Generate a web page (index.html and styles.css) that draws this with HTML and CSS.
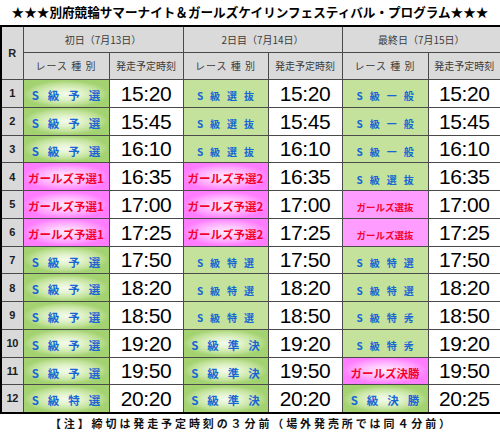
FILE: index.html
```html
<!DOCTYPE html>
<html lang="ja">
<head>
<meta charset="utf-8">
<title>別府競輪サマーナイト プログラム</title>
<link rel="stylesheet" href="styles.css">
</head>
<body>
<h1 class="title">★★★別府競輪サマーナイト＆ガールズケイリンフェスティバル・プログラム★★★</h1>
<table class="program">
  <colgroup>
    <col class="c-r">
    <col class="c-race1"><col class="c-time1">
    <col class="c-race2"><col class="c-time2">
    <col class="c-race3"><col class="c-time3">
  </colgroup>
  <thead>
    <tr class="hd1">
      <th rowspan="2" class="rh">R</th>
      <th colspan="2">初日（7月13日）</th>
      <th colspan="2">2日目（7月14日）</th>
      <th colspan="2">最終日（7月15日）</th>
    </tr>
    <tr class="hd2">
      <th class="kind">レース 種 別</th><th>発走予定時刻</th>
      <th class="kind">レース 種 別</th><th>発走予定時刻</th>
      <th class="kind">レース 種 別</th><th>発走予定時刻</th>
    </tr>
  </thead>
  <tbody>
    <tr><td class="r">1</td><td class="race g glow"><span class="s">S級予選</span></td><td class="time">15:20</td><td class="race g"><span class="s">S級選抜</span></td><td class="time">15:20</td><td class="race g"><span class="s">S級一般</span></td><td class="time">15:20</td></tr>
    <tr><td class="r">2</td><td class="race g glow"><span class="s">S級予選</span></td><td class="time">15:45</td><td class="race g"><span class="s">S級選抜</span></td><td class="time">15:45</td><td class="race g"><span class="s">S級一般</span></td><td class="time">15:45</td></tr>
    <tr><td class="r">3</td><td class="race g glow"><span class="s">S級予選</span></td><td class="time">16:10</td><td class="race g"><span class="s">S級選抜</span></td><td class="time">16:10</td><td class="race g"><span class="s">S級一般</span></td><td class="time">16:10</td></tr>
    <tr><td class="r">4</td><td class="race p glow"><span class="gl">ガールズ予選1</span></td><td class="time">16:35</td><td class="race p glow"><span class="gl">ガールズ予選2</span></td><td class="time">16:35</td><td class="race g"><span class="s">S級選抜</span></td><td class="time">16:35</td></tr>
    <tr><td class="r">5</td><td class="race p glow"><span class="gl">ガールズ予選1</span></td><td class="time">17:00</td><td class="race p glow"><span class="gl">ガールズ予選2</span></td><td class="time">17:00</td><td class="race p"><span class="gl">ガールズ選抜</span></td><td class="time">17:00</td></tr>
    <tr><td class="r">6</td><td class="race p glow"><span class="gl">ガールズ予選1</span></td><td class="time">17:25</td><td class="race p glow"><span class="gl">ガールズ予選2</span></td><td class="time">17:25</td><td class="race p"><span class="gl">ガールズ選抜</span></td><td class="time">17:25</td></tr>
    <tr><td class="r">7</td><td class="race g glow"><span class="s">S級予選</span></td><td class="time">17:50</td><td class="race g"><span class="s">S級特選</span></td><td class="time">17:50</td><td class="race g"><span class="s">S級特選</span></td><td class="time">17:50</td></tr>
    <tr><td class="r">8</td><td class="race g glow"><span class="s">S級予選</span></td><td class="time">18:20</td><td class="race g"><span class="s">S級特選</span></td><td class="time">18:20</td><td class="race g"><span class="s">S級特選</span></td><td class="time">18:20</td></tr>
    <tr><td class="r">9</td><td class="race g glow"><span class="s">S級予選</span></td><td class="time">18:50</td><td class="race g"><span class="s">S級特選</span></td><td class="time">18:50</td><td class="race g"><span class="s">S級特秀</span></td><td class="time">18:50</td></tr>
    <tr><td class="r">10</td><td class="race g glow"><span class="s">S級予選</span></td><td class="time">19:20</td><td class="race g glow"><span class="s">S級準決</span></td><td class="time">19:20</td><td class="race g"><span class="s">S級特秀</span></td><td class="time">19:20</td></tr>
    <tr><td class="r">11</td><td class="race g glow"><span class="s">S級予選</span></td><td class="time">19:50</td><td class="race g glow"><span class="s">S級準決</span></td><td class="time">19:50</td><td class="race p glow"><span class="gl">ガールズ決勝</span></td><td class="time">19:50</td></tr>
    <tr><td class="r">12</td><td class="race g glow"><span class="s">S級特選</span></td><td class="time">20:20</td><td class="race g glow"><span class="s">S級準決</span></td><td class="time">20:20</td><td class="race g glow"><span class="s">S級決勝</span></td><td class="time">20:25</td></tr>
  </tbody>
</table>
<p class="note">【注】締切は発走予定時刻の３分前（場外発売所では同４分前）</p>
</body>
</html>
```
FILE: styles.css
```css
html, body {
  margin: 0;
  padding: 0;
  background: #fff;
}
body {
  width: 500px;
  font-family: "Noto Sans CJK JP", "Liberation Sans", sans-serif;
  color: #222;
}
.title {
  margin: 0;
  height: 25px;
  line-height: 24px;
  font-size: 12.6px;
  font-weight: 700;
  text-align: center;
  color: #000;
  white-space: nowrap;
}
.program {
  width: 500px;
  border-collapse: collapse;
  table-layout: fixed;
  border: 2px solid #000;
}
.c-r { width: 22px; }
.c-race1 { width: 86px; }
.c-time1 { width: 74px; }
.c-race2 { width: 85px; }
.c-time2 { width: 74px; }
.c-race3 { width: 86px; }
.c-time3 { width: 73px; }

.program th,
.program td {
  border: 1px solid #4a4a4a;
  padding: 0;
  text-align: center;
  vertical-align: middle;
  white-space: nowrap;
  overflow: hidden;
}
.program th {
  background: #dadada;
  font-weight: 400;
  font-size: 10px;
  color: #3a3a3a;
}
.hd1 { height: 26px; }
.hd2 { height: 27.5px; }
.program th.rh {
  font-family: "Liberation Sans", sans-serif;
  font-weight: 700;
  font-size: 11px;
  color: #222;
}
.program th.kind { letter-spacing: 1px; }
.program tbody tr { height: 27.75px; }

.program td.r {
  background: #d9d9d9;
  font-family: "Liberation Sans", sans-serif;
  font-weight: 700;
  font-size: 11px;
  color: #1c1c1c;
  letter-spacing: -0.3px;
}
.program td.time {
  background: #fff;
  font-family: "Liberation Sans", sans-serif;
  font-size: 21px;
  color: #000;
  letter-spacing: -0.4px;
  line-height: 1;
}
.race { font-weight: 700; line-height: 1; }
.race.g { background: #c4e29c; }
.race.p { background: #ff9cff; }
.race.g.glow {
  background: radial-gradient(ellipse farthest-side at 50% 50%, #f4fbec 0%, #e0f2c9 40%, #bfe197 78%, #a3d270 100%);
}
.race.p.glow {
  background: radial-gradient(ellipse farthest-side at 50% 50%, #ffeaff 0%, #ffcaff 40%, #ff9cff 78%, #ff7cff 100%);
}
.s {
  color: #1766d4;
  font-size: 10px;
  letter-spacing: 7px;
  margin-right: -7px;
}
.glow .s {
  font-size: 11.5px;
  letter-spacing: 9px;
  margin-right: -9px;
}
.gl {
  color: #f5002d;
  font-size: 9.5px;
}
.glow .gl {
  font-size: 11.5px;
}
.note {
  margin: 0;
  height: 20px;
  line-height: 18px;
  font-size: 11px;
  font-weight: 700;
  letter-spacing: 2.9px;
  padding-left: 2.9px;
  text-align: center;
  color: #111;
  white-space: nowrap;
}
```
